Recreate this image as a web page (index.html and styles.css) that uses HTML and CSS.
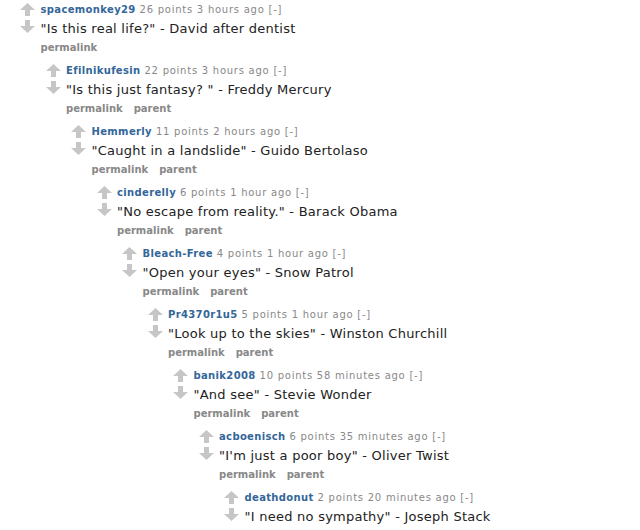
FILE: index.html
```html
<!DOCTYPE html>
<html>
<head>
<meta charset="utf-8">
<link rel="stylesheet" href="styles.css">
</head>
<body>
<div class="thread">
  <div class="comment">
    <div class="midcol">
      <svg class="arrow" viewBox="0 0 15 13"><polygon points="7.5,0 15,7 10,7 10,13 5,13 5,7 0,7"/></svg>
      <svg class="arrow" viewBox="0 0 15 13"><polygon points="7.5,13 15,6 10,6 10,0 5,0 5,6 0,6"/></svg>
    </div>
    <div class="entry">
      <p class="tagline"><a class="author">spacemonkey29</a> 26 points 3 hours ago <span class="toggle">[-]</span></p>
      <p class="md">"Is this real life?" - David after dentist</p>
      <ul class="buttons"><li>permalink</li></ul>
      <div class="child">
  <div class="comment">
    <div class="midcol">
      <svg class="arrow" viewBox="0 0 15 13"><polygon points="7.5,0 15,7 10,7 10,13 5,13 5,7 0,7"/></svg>
      <svg class="arrow" viewBox="0 0 15 13"><polygon points="7.5,13 15,6 10,6 10,0 5,0 5,6 0,6"/></svg>
    </div>
    <div class="entry">
      <p class="tagline"><a class="author">Efilnikufesin</a> 22 points 3 hours ago <span class="toggle">[-]</span></p>
      <p class="md">"Is this just fantasy? " - Freddy Mercury</p>
      <ul class="buttons"><li>permalink</li><li>parent</li></ul>
      <div class="child">
  <div class="comment">
    <div class="midcol">
      <svg class="arrow" viewBox="0 0 15 13"><polygon points="7.5,0 15,7 10,7 10,13 5,13 5,7 0,7"/></svg>
      <svg class="arrow" viewBox="0 0 15 13"><polygon points="7.5,13 15,6 10,6 10,0 5,0 5,6 0,6"/></svg>
    </div>
    <div class="entry">
      <p class="tagline"><a class="author">Hemmerly</a> 11 points 2 hours ago <span class="toggle">[-]</span></p>
      <p class="md">"Caught in a landslide" - Guido Bertolaso</p>
      <ul class="buttons"><li>permalink</li><li>parent</li></ul>
      <div class="child">
  <div class="comment">
    <div class="midcol">
      <svg class="arrow" viewBox="0 0 15 13"><polygon points="7.5,0 15,7 10,7 10,13 5,13 5,7 0,7"/></svg>
      <svg class="arrow" viewBox="0 0 15 13"><polygon points="7.5,13 15,6 10,6 10,0 5,0 5,6 0,6"/></svg>
    </div>
    <div class="entry">
      <p class="tagline"><a class="author">cinderelly</a> 6 points 1 hour ago <span class="toggle">[-]</span></p>
      <p class="md">"No escape from reality." - Barack Obama</p>
      <ul class="buttons"><li>permalink</li><li>parent</li></ul>
      <div class="child">
  <div class="comment">
    <div class="midcol">
      <svg class="arrow" viewBox="0 0 15 13"><polygon points="7.5,0 15,7 10,7 10,13 5,13 5,7 0,7"/></svg>
      <svg class="arrow" viewBox="0 0 15 13"><polygon points="7.5,13 15,6 10,6 10,0 5,0 5,6 0,6"/></svg>
    </div>
    <div class="entry">
      <p class="tagline"><a class="author">Bleach-Free</a> 4 points 1 hour ago <span class="toggle">[-]</span></p>
      <p class="md">"Open your eyes" - Snow Patrol</p>
      <ul class="buttons"><li>permalink</li><li>parent</li></ul>
      <div class="child">
  <div class="comment">
    <div class="midcol">
      <svg class="arrow" viewBox="0 0 15 13"><polygon points="7.5,0 15,7 10,7 10,13 5,13 5,7 0,7"/></svg>
      <svg class="arrow" viewBox="0 0 15 13"><polygon points="7.5,13 15,6 10,6 10,0 5,0 5,6 0,6"/></svg>
    </div>
    <div class="entry">
      <p class="tagline"><a class="author">Pr4370r1u5</a> 5 points 1 hour ago <span class="toggle">[-]</span></p>
      <p class="md">"Look up to the skies" - Winston Churchill</p>
      <ul class="buttons"><li>permalink</li><li>parent</li></ul>
      <div class="child">
  <div class="comment">
    <div class="midcol">
      <svg class="arrow" viewBox="0 0 15 13"><polygon points="7.5,0 15,7 10,7 10,13 5,13 5,7 0,7"/></svg>
      <svg class="arrow" viewBox="0 0 15 13"><polygon points="7.5,13 15,6 10,6 10,0 5,0 5,6 0,6"/></svg>
    </div>
    <div class="entry">
      <p class="tagline"><a class="author">banik2008</a> 10 points 58 minutes ago <span class="toggle">[-]</span></p>
      <p class="md">"And see" - Stevie Wonder</p>
      <ul class="buttons"><li>permalink</li><li>parent</li></ul>
      <div class="child">
  <div class="comment">
    <div class="midcol">
      <svg class="arrow" viewBox="0 0 15 13"><polygon points="7.5,0 15,7 10,7 10,13 5,13 5,7 0,7"/></svg>
      <svg class="arrow" viewBox="0 0 15 13"><polygon points="7.5,13 15,6 10,6 10,0 5,0 5,6 0,6"/></svg>
    </div>
    <div class="entry">
      <p class="tagline"><a class="author">acboenisch</a> 6 points 35 minutes ago <span class="toggle">[-]</span></p>
      <p class="md">"I'm just a poor boy" - Oliver Twist</p>
      <ul class="buttons"><li>permalink</li><li>parent</li></ul>
      <div class="child">
  <div class="comment">
    <div class="midcol">
      <svg class="arrow" viewBox="0 0 15 13"><polygon points="7.5,0 15,7 10,7 10,13 5,13 5,7 0,7"/></svg>
      <svg class="arrow" viewBox="0 0 15 13"><polygon points="7.5,13 15,6 10,6 10,0 5,0 5,6 0,6"/></svg>
    </div>
    <div class="entry">
      <p class="tagline"><a class="author">deathdonut</a> 2 points 20 minutes ago <span class="toggle">[-]</span></p>
      <p class="md">"I need no sympathy" - Joseph Stack</p>
      <ul class="buttons"><li>permalink</li><li>parent</li></ul>
    </div>
  </div>
      </div>
    </div>
  </div>
      </div>
    </div>
  </div>
      </div>
    </div>
  </div>
      </div>
    </div>
  </div>
      </div>
    </div>
  </div>
      </div>
    </div>
  </div>
      </div>
    </div>
  </div>
      </div>
    </div>
  </div>
</div>
</body>
</html>
```
FILE: styles.css
```css
html, body {
  margin: 0;
  padding: 0;
  background: #ffffff;
  font-family: "DejaVu Sans", Verdana, sans-serif;
  overflow: hidden;
}

.thread {
  padding: 4px 0 0 20px;
}

.comment {
  display: flex;
  align-items: flex-start;
}

.midcol {
  width: 20.5px;
  flex: none;
  display: flex;
  flex-direction: column;
  gap: 4px;
  margin-top: -1px;
}

.arrow {
  width: 15px;
  height: 13px;
  fill: #c6c6c6;
  display: block;
}

.entry {
  flex: 1;
  min-width: 0;
}

.tagline {
  margin: 0;
  font-size: 10px;
  line-height: 12px;
  letter-spacing: 0.75px;
  color: #888888;
  white-space: nowrap;
}

.author {
  color: #336699;
  font-weight: bold;
  letter-spacing: 0.35px;
}

.toggle {
  color: #8a8a8a;
}

.md {
  margin: 4px 0 0;
  font-size: 13px;
  line-height: 18px;
  letter-spacing: 0.25px;
  color: #222222;
  white-space: nowrap;
}

.buttons {
  list-style: none;
  margin: 4px 0 0;
  padding: 0;
  display: flex;
  gap: 11px;
  font-size: 10px;
  line-height: 12px;
  font-weight: bold;
  color: #888888;
}

.child {
  margin-top: 11px;
  padding-left: 5px;
}
```
